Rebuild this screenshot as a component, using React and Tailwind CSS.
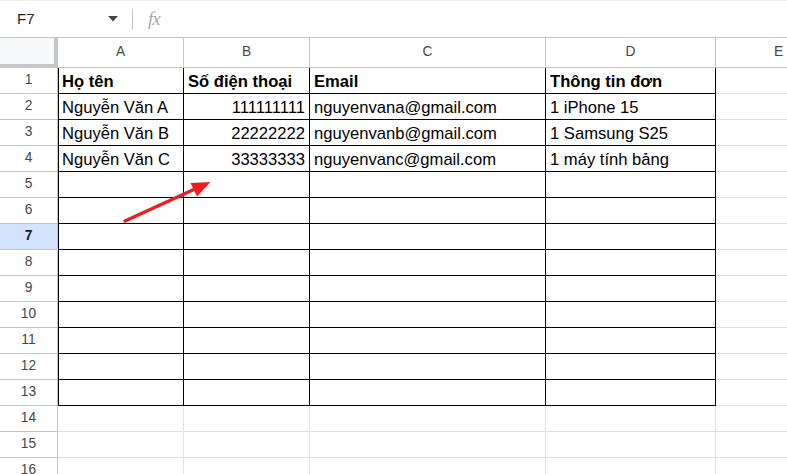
const rows = [
  ['Họ tên', 'Số điện thoại', 'Email', 'Thông tin đơn'],
  ['Nguyễn Văn A', '111111111', 'nguyenvana@gmail.com', '1 iPhone 15'],
  ['Nguyễn Văn B', '22222222', 'nguyenvanb@gmail.com', '1 Samsung S25'],
  ['Nguyễn Văn C', '33333333', 'nguyenvanc@gmail.com', '1 máy tính bảng'],
]

const letters = ['A', 'B', 'C', 'D', 'E']
const rowNums = Array.from({ length: 16 }, (_, i) => i + 1)

function FormulaBar() {
  return (
    <div className="h-[38px] flex items-center border-t border-t-[#f1f1f1] border-b border-[#c4c7c5] text-[#1f1f1f]">
      <div className="w-[132px] flex items-center pl-[17px] pr-[14px] justify-between">
        <span className="text-[15px] pt-[1px]">F7</span>
        <svg width="10" height="6" viewBox="0 0 10 6">
          <path d="M0 0 L10 0 L5 5.5 Z" fill="#444746" />
        </svg>
      </div>
      <div className="w-px h-[21px] bg-[#c4c7c5]" />
      <span className="ml-[15px] text-[19px] italic text-[#a8a8a8] tracking-[-1px] [font-family:'Liberation_Serif',serif]">
        fx
      </span>
    </div>
  )
}

function Cell({ r, c }) {
  const inTable = r <= 13 && c <= 3
  const data = rows[r - 1]
  const text = data && c <= 3 ? data[c] : ''
  const bold = r === 1
  const alignRight = c === 1 && r > 1 && r <= 4
  return (
    <div
      className={
        'h-[26px] flex items-center overflow-hidden whitespace-nowrap pr-[4px] pt-[1px] border-r border-b ' +
        (c === 0 ? 'pl-[3px] ' : 'pl-[4px] ') +
        (inTable ? 'border-black ' : 'border-[#e2e2e2] ') +
        (inTable && c === 0 ? 'border-l border-l-black ' : '') +
        (alignRight ? 'justify-end ' : '') +
        (bold ? 'font-bold' : '')
      }
    >
      {text}
    </div>
  )
}

export default function App() {
  return (
    <div className="relative w-[787px] h-[474px] overflow-hidden bg-white [font-family:'Liberation_Sans',Arial,sans-serif]">
      <FormulaBar />
      <div className="w-[842px] grid grid-cols-[58px_126px_126px_236px_170px_126px]">
        <div className="h-[30px] bg-[#f8f9fa] border-r-4 border-b-4 border-[#c4c7c5]" />
        {letters.map((l) => (
          <div
            key={l}
            className="h-[30px] flex items-center justify-center border-r border-b border-[#c4c7c5] text-[13.75px] text-[#444746]"
          >
            {l}
          </div>
        ))}
        {rowNums.map((r) => (
          <div key={r} className="contents">
            <div
              className={
                'h-[26px] flex items-center justify-center border-r border-b border-[#c4c7c5] text-[13.75px] ' +
                (r === 7 ? 'bg-[#d3e3fd] font-bold text-[#041e49]' : 'text-[#444746]')
              }
            >
              {r}
            </div>
            {letters.map((l, c) => (
              <div key={l} className="text-[16.6px] leading-[19px] text-black">
                <Cell r={r} c={c} />
              </div>
            ))}
          </div>
        ))}
      </div>
      <svg className="absolute left-0 top-0 pointer-events-none" width="787" height="474">
        <line x1="125" y1="221" x2="196" y2="188.5" stroke="#ee1d23" strokeWidth="3.5" strokeLinecap="round" />
        <path d="M210.5 182 L190.5 183 L197 196.5 Z" fill="#ee1d23" />
      </svg>
    </div>
  )
}
